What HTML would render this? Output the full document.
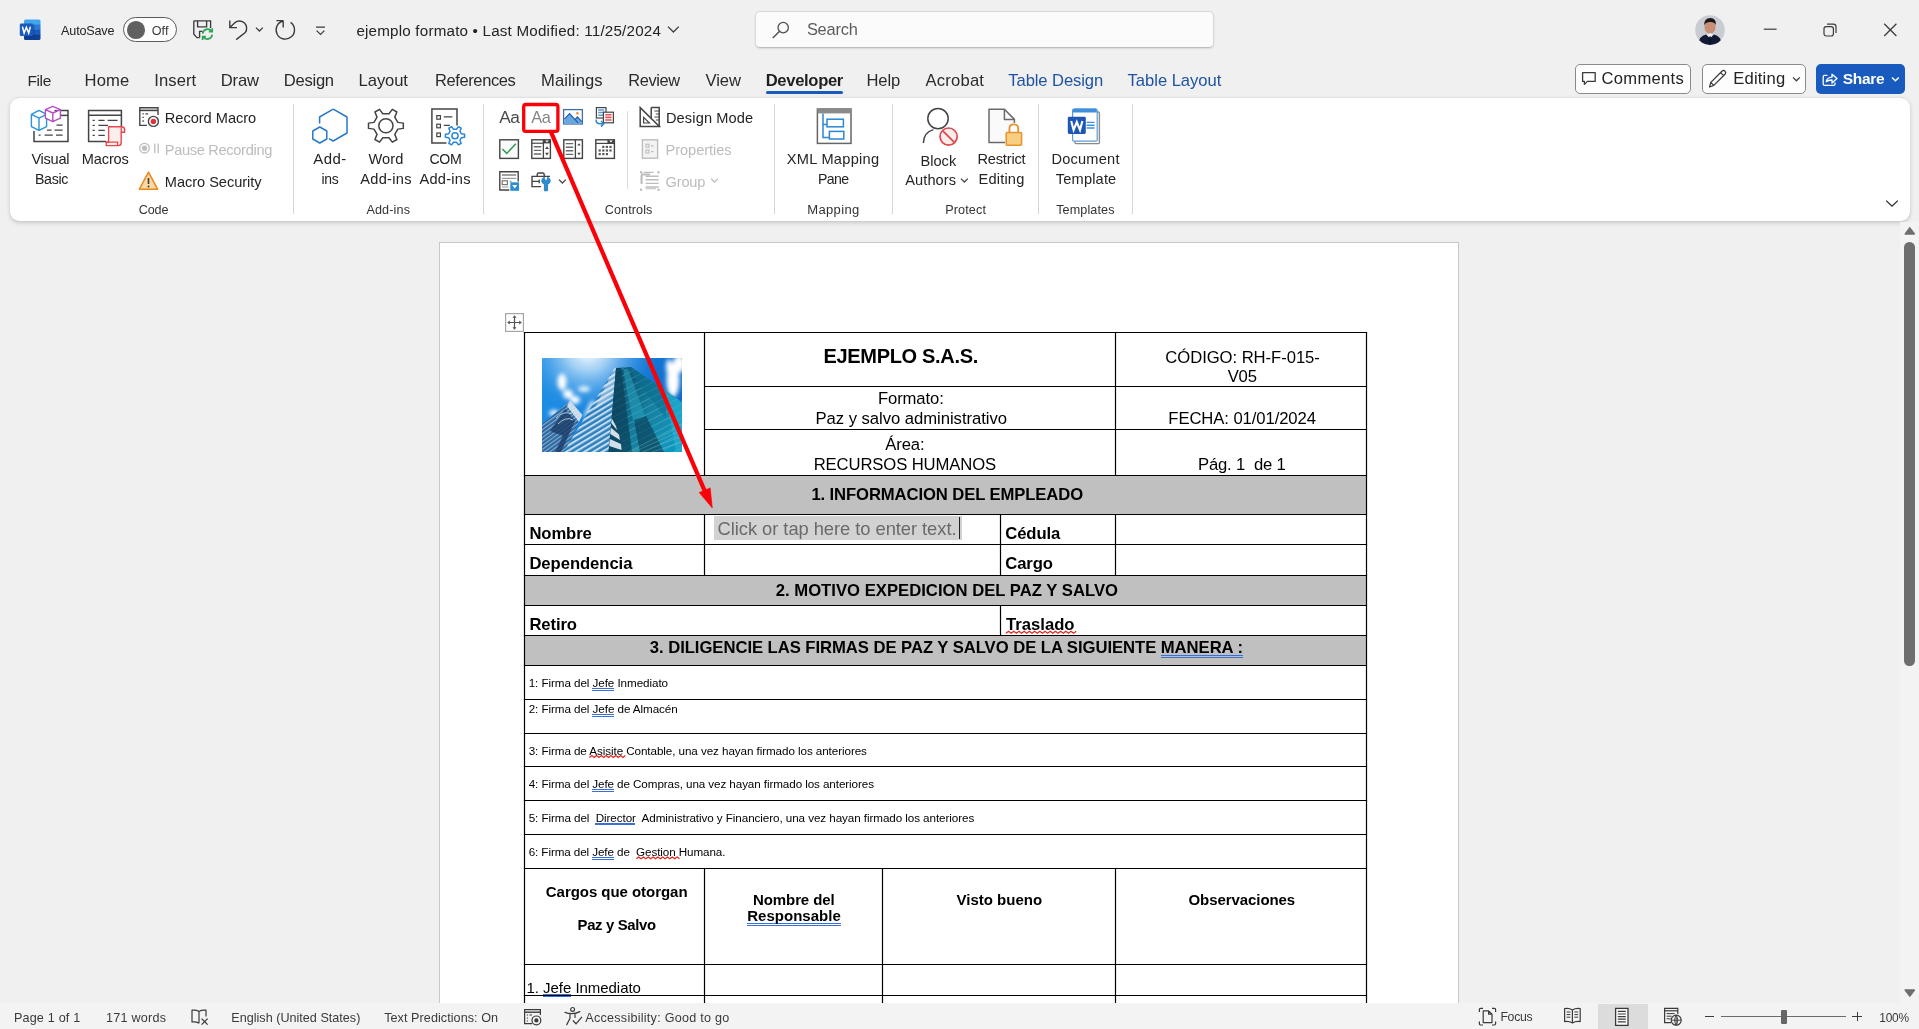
<!DOCTYPE html>
<html><head><meta charset="utf-8"><title>ejemplo formato - Word</title><style>
html,body{margin:0;padding:0}body{width:1919px;height:1029px;position:relative;overflow:hidden;background:#f0f0f0;font-family:"Liberation Sans", sans-serif}
.t{position:absolute;white-space:pre;line-height:1}
#app{position:absolute;left:0;top:0;width:1919px;height:1029px;overflow:hidden;will-change:transform;transform:translateZ(0)}
</style></head><body><div id="app">
<svg style="position:absolute;left:19px;top:19px;overflow:visible;" width="22" height="22" viewBox="0 0 22 22">
<defs><clipPath id="wl"><rect x="5" y="0.5" width="16.5" height="20.5" rx="1.6"/></clipPath></defs>
<g clip-path="url(#wl)">
<rect x="5" y="0" width="17" height="6" fill="#41a5ee"/>
<rect x="5" y="5.6" width="17" height="5.4" fill="#2b7cd3"/>
<rect x="5" y="10.8" width="17" height="5.2" fill="#185abd"/>
<rect x="5" y="15.8" width="17" height="6" fill="#103f91"/>
</g>
<rect x="6.5" y="5.6" width="9" height="12.8" rx="1" fill="#0b2f6e" opacity=".35"/>
<rect x="0.8" y="4.6" width="13.2" height="12.4" rx="1.3" fill="#185abd"/>
<path d="M3.4 7.6 L5.1 14 L7.4 8.2 L9.7 14 L11.4 7.6" fill="none" stroke="#fff" stroke-width="1.5" stroke-linejoin="miter" stroke-linecap="butt"/>
</svg>
<div style="position:absolute;left:123px;top:17px;width:51.6px;height:23.4px;border:1.3px solid #5a5a5a;border-radius:13px;background:#fdfdfd"></div>
<div style="position:absolute;left:127.2px;top:21.2px;width:17.6px;height:17.6px;border-radius:50%;background:#606060"></div>
<svg style="position:absolute;left:192px;top:19px;overflow:visible;" width="24" height="23" viewBox="0 0 24 23">
<path d="M1.8 1.8 H18.6 V9 M1.8 1.8 V15.2 L5 18.6 H7.6 M5.6 1.8 V7.8 H14.6 V1.8 M7.6 18.6 V12.4 H10.5" fill="none" stroke="#3b3b3b" stroke-width="1.35"/>
<path d="M10.6 14.6 A5 5 0 0 1 19.6 12.2 M20.2 9.2 V12.6 H16.8" fill="none" stroke="#2fa55a" stroke-width="1.7"/>
<path d="M20.2 15.6 A5 5 0 0 1 11.2 18 M10.6 21 V17.6 H14" fill="none" stroke="#2fa55a" stroke-width="1.7"/>
</svg>
<svg style="position:absolute;left:228px;top:19px;overflow:visible;" width="22" height="22" viewBox="0 0 22 22">
<path d="M1.8 1.6 V8.6 H9 M2.2 8.2 L7 3.6 A7.2 7.2 0 0 1 17.2 13.6 L8.2 20.6" fill="none" stroke="#3b3b3b" stroke-width="1.4" stroke-linejoin="miter"/>
</svg>
<svg style="position:absolute;left:255px;top:26px;overflow:visible;" width="9" height="7" viewBox="0 0 9 7"><path d="M1 1.6 L4.4 5 L7.8 1.6" fill="none" stroke="#3b3b3b" stroke-width="1.3"/></svg>
<svg style="position:absolute;left:275px;top:19px;overflow:visible;" width="22" height="22" viewBox="0 0 22 22">
<path d="M8.2 1.6 H1.4 M8.2 1.6 V8.4 M8 2 A9.2 9.2 0 1 0 15.6 3.4" fill="none" stroke="#3b3b3b" stroke-width="1.4"/>
</svg>
<svg style="position:absolute;left:315px;top:26px;overflow:visible;" width="11" height="10" viewBox="0 0 11 10"><path d="M1 1.1 H10 M1.6 4.6 L5.5 8.4 L9.4 4.6" fill="none" stroke="#3b3b3b" stroke-width="1.3"/></svg>
<svg style="position:absolute;left:667px;top:25px;overflow:visible;" width="13" height="9" viewBox="0 0 13 9"><path d="M1 1.6 L6.4 7 L11.8 1.6" fill="none" stroke="#3b3b3b" stroke-width="1.3"/></svg>
<div style="position:absolute;left:755.4px;top:10.8px;width:459px;height:37.6px;box-sizing:border-box;border:1px solid #d8d8d8;border-bottom-color:#bdbdbd;border-radius:5px;background:#fbfbfb;box-shadow:0 1px 2px rgba(0,0,0,.10)"></div>
<svg style="position:absolute;left:771px;top:20px;overflow:visible;" width="20" height="20" viewBox="0 0 20 20"><circle cx="12.2" cy="7.6" r="5.2" fill="none" stroke="#505050" stroke-width="1.3"/><path d="M8.4 11.4 L1.8 18" stroke="#505050" stroke-width="1.4"/></svg>
<svg style="position:absolute;left:1694.5px;top:14.5px;overflow:visible;" width="30" height="30" viewBox="0 0 30 30">
<defs><clipPath id="av"><circle cx="15" cy="15" r="14.8"/></clipPath></defs>
<g clip-path="url(#av)">
<rect width="30" height="30" fill="#c9ccd3"/>
<ellipse cx="15" cy="12" rx="5.6" ry="6.6" fill="#c98f75"/>
<path d="M9 10.5 Q9 3 15.4 3 Q21.4 3 21 10.5 Q20 6.8 15 7 Q10.4 7 9 10.5Z" fill="#1c1614"/>
<path d="M3 30 Q4 21 11 19.6 L15 23 L19 19.6 Q26 21 27 30Z" fill="#121a36"/>
<path d="M12 19.4 L15 23.4 L18 19.4 L15 18.2Z" fill="#f1f1f1"/>
<path d="M14.2 21.5 L15.8 21.5 L16.4 30 L13.6 30Z" fill="#0c1226"/>
</g></svg>
<svg style="position:absolute;left:1762px;top:22px;overflow:visible;" width="16" height="16" viewBox="0 0 16 16"><path d="M1.8 7.2 H14.6" stroke="#3b3b3b" stroke-width="1.2"/></svg>
<svg style="position:absolute;left:1822px;top:22px;overflow:visible;" width="16" height="16" viewBox="0 0 16 16"><rect x="2" y="4.6" width="9.4" height="9.4" rx="2.2" fill="none" stroke="#3b3b3b" stroke-width="1.2"/><path d="M5 2.2 H11.4 Q14 2.2 14 4.8 V11" fill="none" stroke="#3b3b3b" stroke-width="1.2"/></svg>
<svg style="position:absolute;left:1882px;top:22px;overflow:visible;" width="16" height="16" viewBox="0 0 16 16"><path d="M2.2 1.8 L14.4 14 M14.4 1.8 L2.2 14" stroke="#3b3b3b" stroke-width="1.25"/></svg>
<div style="position:absolute;left:765.7px;top:91.3px;width:77.6px;height:3px;background:#185abd;border-radius:1.5px"></div>
<div style="position:absolute;left:1575.3px;top:64.3px;width:116.2px;height:29.4px;box-sizing:border-box;border:1px solid #8a8a8a;border-radius:5px;background:#fdfdfd"></div>
<svg style="position:absolute;left:1581px;top:71px;overflow:visible;" width="17" height="16" viewBox="0 0 17 16"><path d="M1.6 1.6 H14.2 V10.4 H6.4 L3.4 13.4 V10.4 H1.6Z" fill="none" stroke="#3b3b3b" stroke-width="1.3" stroke-linejoin="round"/></svg>
<div style="position:absolute;left:1702.2px;top:64.3px;width:103.4px;height:29.4px;box-sizing:border-box;border:1px solid #8a8a8a;border-radius:5px;background:#fdfdfd"></div>
<svg style="position:absolute;left:1707px;top:68px;overflow:visible;" width="22" height="22" viewBox="0 0 22 22"><path d="M2.6 19 L3.8 14.4 L15.2 3 Q16.6 1.8 18 3.2 Q19.4 4.6 18.2 6 L6.8 17.4 Z M3.8 14.4 L6.8 17.4 M13.6 4.6 L16.6 7.6" fill="none" stroke="#3b3b3b" stroke-width="1.25" stroke-linejoin="round"/></svg>
<svg style="position:absolute;left:1792px;top:76px;overflow:visible;" width="9" height="7" viewBox="0 0 9 7"><path d="M1 1.4 L4.4 4.8 L7.8 1.4" fill="none" stroke="#3b3b3b" stroke-width="1.3"/></svg>
<div style="position:absolute;left:1816px;top:64.3px;width:89px;height:29.4px;border-radius:5px;background:#185abd"></div>
<svg style="position:absolute;left:1821px;top:70px;overflow:visible;" width="18" height="18" viewBox="0 0 18 18"><path d="M6.4 5.4 H3.6 Q2.2 5.4 2.2 6.8 V14 Q2.2 15.4 3.6 15.4 H12.6 Q14 15.4 14 14 V12.4 M5.2 11.8 Q6 7.4 11 7.2 V4.2 L16 8.6 L11 13 V10 Q7.6 9.8 5.2 11.8Z" fill="none" stroke="#fff" stroke-width="1.3" stroke-linejoin="round"/></svg>
<svg style="position:absolute;left:1891px;top:76px;overflow:visible;" width="9" height="7" viewBox="0 0 9 7"><path d="M1 1.4 L4.4 4.8 L7.8 1.4" fill="none" stroke="#fff" stroke-width="1.4"/></svg>
<div style="position:absolute;left:10px;top:98px;width:1900px;height:123px;background:#fff;border-radius:9px;box-shadow:0 1.5px 4px rgba(0,0,0,.17),0 0 1px rgba(0,0,0,.18)"></div>
<div style="position:absolute;left:293px;top:104px;width:1px;height:110px;background:#d6d6d6"></div>
<div style="position:absolute;left:483px;top:104px;width:1px;height:110px;background:#d6d6d6"></div>
<div style="position:absolute;left:774px;top:104px;width:1px;height:110px;background:#d6d6d6"></div>
<div style="position:absolute;left:892px;top:104px;width:1px;height:110px;background:#d6d6d6"></div>
<div style="position:absolute;left:1038px;top:104px;width:1px;height:110px;background:#d6d6d6"></div>
<div style="position:absolute;left:1132px;top:104px;width:1px;height:110px;background:#d6d6d6"></div>
<div style="position:absolute;left:627px;top:111px;width:1px;height:78px;background:#dcdcdc"></div>
<svg style="position:absolute;left:30px;top:104px;overflow:visible;" width="42" height="40" viewBox="0 0 42 40">
<path d="M24.5 6.6 H38 V37.4 H4 V27" fill="none" stroke="#444444" stroke-width="1.5"/>
<path d="M25 11.4 H38" stroke="#444444" stroke-width="1.5"/>
<path d="M26.5 21.2 H32.6 M17 26.2 H21.6 M24.5 26.2 H32.6 M8.6 31.2 H10.6 M14.6 31.2 H22.8 M26 31.2 H32.6" stroke="#444444" stroke-width="1.3"/>
<path d="M9 6.4 L16.6 10.4 V22.6 L9 26.4 L1.4 22.6 V10.4 Z M1.4 10.4 L9 14.2 L16.6 10.4 M9 14.2 V26.4" fill="#fff" stroke="#2a93dd" stroke-width="1.4" stroke-linejoin="round"/>
<path d="M22.8 2.4 L30.4 5.6 V14.2 L22.8 17.6 L15.4 14.2 V5.6 Z M15.4 5.6 L22.8 9 L30.4 5.6 M22.8 9 V17.6" fill="#fff" stroke="#b54fc4" stroke-width="1.4" stroke-linejoin="round"/>
</svg>
<svg style="position:absolute;left:86px;top:104px;overflow:visible;" width="42" height="44" viewBox="0 0 42 44">
<path d="M20 37.4 H2.6 V6.6 H35.4 V22" fill="none" stroke="#444444" stroke-width="1.5"/>
<path d="M2.6 11.2 H35.4" stroke="#444444" stroke-width="1.5"/>
<path d="M6.6 16.4 H8.8 M12.4 16.4 H18.6 M21.6 16.4 H31.6 M6.6 21.4 H8.8 M12.4 21.4 H22 M6.6 26.4 H8.8 M12.4 26.4 H18.8 M6.6 31.4 H8.8 M12.4 31.4 H18.8" stroke="#444444" stroke-width="1.3"/>
<path d="M22.6 22.8 H35.6 Q38.6 22.8 38.6 25.6 V28.2 H35.2 V38.8 Q35.2 41.6 32.4 41.6 H20.2 V38.2 H22.6 Z" fill="#fdeeee" stroke="#e5484d" stroke-width="1.4" stroke-linejoin="round"/>
<path d="M35.2 28.2 V25.6 Q35.2 22.8 35.6 22.8 M20.2 38.2 H31.6 V41.4" fill="none" stroke="#e5484d" stroke-width="1.3"/>
</svg>
<svg style="position:absolute;left:138px;top:106px;overflow:visible;" width="22" height="22" viewBox="0 0 22 22">
<path d="M9 19.4 H1.8 V1.8 H20 V9" fill="none" stroke="#444444" stroke-width="1.4"/>
<path d="M1.8 4.4 H20" stroke="#444444" stroke-width="1.6"/>
<path d="M4.4 7.8 H5.8 M7.4 7.8 H10.2 M4.4 11.4 H5.8 M4.4 15 H5.8" stroke="#444444" stroke-width="1.3"/>
<circle cx="15.4" cy="15.4" r="5" fill="#fff" stroke="#444444" stroke-width="1.4"/>
<circle cx="15.4" cy="15.4" r="2.7" fill="#e0303a"/>
</svg>
<svg style="position:absolute;left:138px;top:141px;overflow:visible;" width="24" height="14" viewBox="0 0 24 14">
<circle cx="6.5" cy="7.2" r="4.8" fill="none" stroke="#bdbdbd" stroke-width="1.3"/>
<circle cx="6.5" cy="7.2" r="2.6" fill="#bdbdbd"/>
<path d="M16.8 2.4 V12 M20.2 2.4 V12" stroke="#bdbdbd" stroke-width="1.3"/>
</svg>
<svg style="position:absolute;left:138px;top:170px;overflow:visible;" width="22" height="21" viewBox="0 0 22 21">
<path d="M10.5 2.2 L19.6 19.2 H1.4 Z" fill="#fbd9a6" stroke="#e8891c" stroke-width="1.5" stroke-linejoin="round"/>
<path d="M10.5 8 V14" stroke="#3b3b3b" stroke-width="1.6"/><circle cx="10.5" cy="16.4" r="1" fill="#3b3b3b"/>
</svg>
<svg style="position:absolute;left:310px;top:106px;overflow:visible;" width="40" height="40" viewBox="0 0 40 40">
<path d="M23.2 3.2 L37 11 V27 L23.2 35 L19 32.6 M9.6 17.6 V11 L23.2 3.2" fill="none" stroke="#2878c8" stroke-width="1.5" stroke-linejoin="round"/>
<path d="M9.8 21 L16.8 25 V33 L9.8 37 L2.8 33 V25 Z" fill="none" stroke="#2878c8" stroke-width="1.5" stroke-linejoin="round"/>
</svg>
<svg style="position:absolute;left:366px;top:106px;overflow:visible;" width="40" height="40" viewBox="0 0 40 40"><path d="M31.83 16.38 L37.30 17.12 L37.30 22.38 L31.83 23.12 L28.78 28.40 L30.88 33.50 L26.32 36.14 L22.95 31.77 L16.85 31.77 L13.48 36.14 L8.92 33.50 L11.02 28.40 L7.97 23.12 L2.50 22.38 L2.50 17.12 L7.97 16.38 L11.02 11.10 L8.92 6.00 L13.48 3.36 L16.85 7.73 L22.95 7.73 L26.32 3.36 L30.88 6.00 L28.78 11.10Z" fill="none" stroke="#444444" stroke-width="1.5" stroke-linejoin="round"/><circle cx="19.9" cy="19.75" r="7.1" fill="none" stroke="#444444" stroke-width="1.5"/></svg>
<svg style="position:absolute;left:429px;top:106px;overflow:visible;" width="38" height="40" viewBox="0 0 38 40">
<path d="M17.4 37 H2.9 V2.9 H28 V19.4" fill="none" stroke="#444444" stroke-width="1.5"/>
<rect x="7.8" y="9.6" width="3.6" height="3.6" fill="none" stroke="#444444" stroke-width="1.2"/>
<rect x="7.8" y="18.2" width="3.6" height="3.6" fill="none" stroke="#444444" stroke-width="1.2"/>
<rect x="7.8" y="27" width="3.6" height="3.6" fill="none" stroke="#444444" stroke-width="1.2"/>
<path d="M14.8 10.9 H23.4 M14.8 19.3 H20.8" stroke="#444444" stroke-width="1.2"/>
<path d="M32.41 27.79 L35.57 28.15 L35.57 31.35 L32.41 31.71 L30.90 34.32 L32.17 37.23 L29.40 38.84 L27.51 36.28 L24.49 36.28 L22.60 38.84 L19.83 37.23 L21.10 34.32 L19.59 31.71 L16.43 31.35 L16.43 28.15 L19.59 27.79 L21.10 25.18 L19.83 22.27 L22.60 20.66 L24.49 23.22 L27.51 23.22 L29.40 20.66 L32.17 22.27 L30.90 25.18Z" fill="none" stroke="#2a86d6" stroke-width="1.5" stroke-linejoin="round"/><circle cx="26" cy="29.75" r="3.1" fill="none" stroke="#2a86d6" stroke-width="1.5"/></svg>
<svg style="position:absolute;left:562px;top:108px;overflow:visible;" width="22" height="18" viewBox="0 0 22 18">
<rect x="1.6" y="1.6" width="18.8" height="14.4" fill="#fff" stroke="#3d6fb0" stroke-width="1.3"/>
<path d="M2.2 15.4 V11.4 L7.6 5.6 L13 11.6 L15.4 9 L19.8 13.6 V15.4Z" fill="#6aa6e2"/>
<path d="M2.4 11.2 L7.6 5.6 L16 14.8 M13.2 11.4 L15.4 9 L19.8 13.6" fill="none" stroke="#1e5ea8" stroke-width="1.2"/>
<circle cx="15.4" cy="5.2" r="1.3" fill="#e8912d"/>
</svg>
<svg style="position:absolute;left:594px;top:106px;overflow:visible;" width="22" height="22" viewBox="0 0 22 22">
<rect x="2.4" y="1.6" width="9.6" height="10.4" fill="#fff" stroke="#444444" stroke-width="1.2"/>
<path d="M4.2 4 H10.2 M4.2 6.6 H10.2 M4.2 9.2 H10.2" stroke="#5b9bd5" stroke-width="1.5"/>
<rect x="9.4" y="6.2" width="10" height="10.6" fill="#fff" stroke="#444444" stroke-width="1.2"/>
<path d="M11.2 8.8 H17.6 M11.2 11.4 H17.6 M11.2 14 H17.6" stroke="#e0575b" stroke-width="1.6"/>
<path d="M2 13.6 Q2 17.8 6 17.8 H9.4 M7 15 L9.8 17.8 L7 20.6" fill="none" stroke="#2a86d6" stroke-width="1.5"/>
</svg>
<svg style="position:absolute;left:498px;top:138px;overflow:visible;" width="22" height="22" viewBox="0 0 22 22">
<rect x="1.8" y="1.8" width="18.6" height="18.6" fill="#fbfbfb" stroke="#444444" stroke-width="1.4"/>
<path d="M4.4 11 L8.8 15.4 L17.8 5.8" fill="none" stroke="#2e9a52" stroke-width="1.5"/>
</svg>
<svg style="position:absolute;left:530px;top:138px;overflow:visible;" width="22" height="22" viewBox="0 0 22 22"><rect x="1.8" y="1.8" width="18.6" height="18.6" fill="#fff" stroke="#444444" stroke-width="1.4"/><path d="M13.4 2 V20.4" stroke="#444444" stroke-width="1.3"/><rect x="13.4" y="1.8" width="7" height="3.6" fill="#444444"/><path d="M15.2 2.6 H18.8 L17 4.6Z" fill="#fff"/><path d="M2 5.2 H13.4" stroke="#444444" stroke-width="1.2"/><path d="M3.8 8.8 H11.2 M3.8 12.4 H11.2 M3.8 16 H11.2" stroke="#6a6a6a" stroke-width="1.4"/><path d="M15.1 11 L17 8.2 L18.9 11Z M15.1 14.8 L17 17.6 L18.9 14.8Z" fill="#444444"/></svg>
<svg style="position:absolute;left:562px;top:138px;overflow:visible;" width="22" height="22" viewBox="0 0 22 22"><rect x="1.8" y="1.8" width="18.6" height="18.6" fill="#fff" stroke="#444444" stroke-width="1.4"/><path d="M13.4 2 V20.4" stroke="#444444" stroke-width="1.3"/><path d="M3.8 5.6 H11.2 M3.8 9.2 H11.2 M3.8 12.8 H11.2 M3.8 16.4 H11.2" stroke="#6a6a6a" stroke-width="1.4"/><path d="M15.3 7.6 L17 5.2 L18.7 7.6Z M15.3 14.8 L17 17.2 L18.7 14.8Z" fill="#444444"/></svg>
<svg style="position:absolute;left:594px;top:138px;overflow:visible;" width="22" height="22" viewBox="0 0 22 22">
<rect x="1.8" y="1.8" width="18.6" height="18.6" fill="#fff" stroke="#444444" stroke-width="1.4"/>
<path d="M2 5.4 H20.4" stroke="#444444" stroke-width="1.2"/>
<rect x="13.4" y="1.8" width="7" height="3.6" fill="#444444"/><path d="M15.2 2.6 H18.8 L17 4.6Z" fill="#fff"/>
<g fill="#5a5a5a">
<rect x="8.2" y="7.8" width="2.2" height="2.2"/><rect x="11.8" y="7.8" width="2.2" height="2.2"/><rect x="15.4" y="7.8" width="2.2" height="2.2"/>
<rect x="4.6" y="11.4" width="2.2" height="2.2"/><rect x="8.2" y="11.4" width="2.2" height="2.2"/><rect x="11.8" y="11.4" width="2.2" height="2.2"/><rect x="15.4" y="11.4" width="2.2" height="2.2"/>
<rect x="4.6" y="15" width="2.2" height="2.2"/><rect x="8.2" y="15" width="2.2" height="2.2"/><rect x="11.8" y="15" width="2.2" height="2.2"/>
</g></svg>
<svg style="position:absolute;left:498px;top:170px;overflow:visible;" width="22" height="22" viewBox="0 0 22 22">
<path d="M11.4 20 H1.8 V1.8 H20.2 V11.6" fill="none" stroke="#444444" stroke-width="1.4"/>
<path d="M3.8 5 H18.2" stroke="#8a8a8a" stroke-width="1.6"/>
<path d="M3.8 8.4 H18.2" stroke="#9a9a9a" stroke-width="1.2"/>
<rect x="4.2" y="10.8" width="5.2" height="3.8" fill="#fff" stroke="#777" stroke-width="1.2"/>
<path d="M3.8 17 H10.6 M11.6 11.4 H13.6" stroke="#9a9a9a" stroke-width="1.2"/>
<rect x="12.3" y="12.3" width="8.7" height="8.5" fill="#2a8fd0"/>
<path d="M14.2 14.9 H19.2 L16.7 18.6Z" fill="#fff"/>
</svg>
<svg style="position:absolute;left:530px;top:170px;overflow:visible;" width="24" height="22" viewBox="0 0 24 22">
<path d="M11 16.6 H2 V6.4 H20" fill="none" stroke="#444444" stroke-width="1.4"/>
<path d="M7.2 6.2 V4.4 Q7.2 3 8.6 3 H12.8 Q14.2 3 14.2 4.4 V6.2" fill="none" stroke="#444444" stroke-width="1.4"/>
<path d="M2 11.4 H9.2 M9.2 9.6 V13.2" stroke="#444444" stroke-width="1.3"/>
<path d="M14.4 7.2 V10.2 H17.6 V7.2 Q20.6 8.4 20.2 11.4 Q19.8 13.6 17.6 14.2 V20.8 H14.4 V14.2 Q12.2 13.6 11.8 11.4 Q11.4 8.4 14.4 7.2Z" fill="#2a8fd0" stroke="#1b74b8" stroke-width="0.8"/>
</svg>
<svg style="position:absolute;left:558px;top:178px;overflow:visible;" width="9" height="7" viewBox="0 0 9 7"><path d="M1 1.6 L4.4 5 L7.8 1.6" fill="none" stroke="#444444" stroke-width="1.3"/></svg>
<svg style="position:absolute;left:638px;top:106px;overflow:visible;" width="23" height="22" viewBox="0 0 23 22">
<path d="M2.2 1.6 V20.4 H21.4 Z" fill="none" stroke="#444444" stroke-width="1.5" stroke-linejoin="miter"/>
<path d="M5.6 11.4 V17 H11.4 Z" fill="none" stroke="#444444" stroke-width="1.2"/>
<path d="M13.2 1.6 H21.2 V20 M13.2 1.6 V12.4" fill="none" stroke="#444444" stroke-width="1.5"/>
<path d="M16.4 5 H21 M17.8 8 H21 M16.4 11 H21 M17.8 14 H21" stroke="#444444" stroke-width="1.1"/>
</svg>
<svg style="position:absolute;left:640px;top:138px;overflow:visible;" width="20" height="22" viewBox="0 0 20 22">
<rect x="2.4" y="1.8" width="15.2" height="18.4" fill="#f3f3f3" stroke="#bdbdbd" stroke-width="1.4"/>
<rect x="6" y="6.2" width="3" height="3" fill="none" stroke="#bdbdbd" stroke-width="1.1"/>
<rect x="6" y="12" width="3" height="3" fill="none" stroke="#bdbdbd" stroke-width="1.1"/>
<path d="M11 7.8 H13.6 M11 13.6 H13.6" stroke="#bdbdbd" stroke-width="1.2"/>
</svg>
<svg style="position:absolute;left:638px;top:170px;overflow:visible;" width="24" height="22" viewBox="0 0 24 22">
<g fill="#bdbdbd"><rect x="2" y="1.2" width="2.2" height="2.2"/><rect x="19.4" y="1.2" width="2.2" height="2.2"/><rect x="2" y="18.6" width="2.2" height="2.2"/><rect x="19.4" y="18.6" width="2.2" height="2.2"/></g>
<path d="M5.6 2.4 H15.6 M3 5.2 V13.6 M7.6 18.8 H18" stroke="#bdbdbd" stroke-width="1.1" stroke-dasharray="1.2 0"/>
<path d="M7.6 6.2 H20.6 M7.6 9.8 H20.6 M7.6 13.4 H20.6 M7.6 17 H20.6" stroke="#bdbdbd" stroke-width="1.4"/>
<path d="M3 3.6 H12 V5.4 H4.6 V14 H3Z" fill="#bdbdbd"/>
</svg>
<svg style="position:absolute;left:710px;top:177px;overflow:visible;" width="9" height="7" viewBox="0 0 9 7"><path d="M1 1.6 L4.4 5 L7.8 1.6" fill="none" stroke="#bdbdbd" stroke-width="1.3"/></svg>
<svg style="position:absolute;left:814px;top:106px;overflow:visible;" width="40" height="40" viewBox="0 0 40 40">
<rect x="3.4" y="3" width="33.6" height="34.4" fill="#fff" stroke="#666" stroke-width="1.5"/>
<rect x="3.4" y="3" width="33.6" height="4.4" fill="#8a8a8a"/>
<path d="M9 7.6 V31.4 H15 M9 18.6 H13" fill="none" stroke="#2a86d6" stroke-width="1.5"/>
<rect x="13" y="13.2" width="16.4" height="7.6" fill="#fff" stroke="#2a86d6" stroke-width="1.5"/>
<rect x="15.4" y="25.4" width="14.4" height="7.6" fill="#fff" stroke="#2a86d6" stroke-width="1.5"/>
</svg>
<svg style="position:absolute;left:918px;top:106px;overflow:visible;" width="42" height="44" viewBox="0 0 42 44">
<circle cx="20" cy="12.6" r="10.2" fill="none" stroke="#444444" stroke-width="1.5"/>
<path d="M5.4 37 Q5.6 26.4 15.4 23.6" fill="none" stroke="#444444" stroke-width="1.5"/>
<circle cx="30.6" cy="30.6" r="8.6" fill="#fdecec" stroke="#e0474c" stroke-width="1.7"/>
<path d="M24.6 24.6 L36.6 36.6" stroke="#e0474c" stroke-width="1.7"/>
</svg>
<svg style="position:absolute;left:960px;top:177px;overflow:visible;" width="9" height="7" viewBox="0 0 9 7"><path d="M1 1.6 L4.4 5 L7.8 1.6" fill="none" stroke="#444444" stroke-width="1.3"/></svg>
<svg style="position:absolute;left:986px;top:106px;overflow:visible;" width="38" height="42" viewBox="0 0 38 42">
<path d="M19 36.6 H3 V3.2 H18.4 L28.4 13.4 V17" fill="#fafafa" stroke="#6a6a6a" stroke-width="1.5" stroke-linejoin="round"/>
<path d="M18.4 3.2 V13.4 H28.4" fill="none" stroke="#6a6a6a" stroke-width="1.5" stroke-linejoin="round"/>
<path d="M23.4 27 V22.6 Q23.4 18.4 27.8 18.4 Q32.2 18.4 32.2 22.6 V27" fill="none" stroke="#e8912d" stroke-width="1.8"/>
<rect x="20.2" y="26.4" width="15.4" height="12.8" rx="1" fill="#f8cf82" stroke="#e8912d" stroke-width="1.5"/>
</svg>
<svg style="position:absolute;left:1066px;top:106px;overflow:visible;" width="36" height="40" viewBox="0 0 36 40">
<rect x="9" y="6" width="24.4" height="31.6" rx="1" fill="#fff" stroke="#8a8a8a" stroke-width="1.4"/>
<rect x="6.6" y="3" width="24.6" height="32.2" rx="1.2" fill="#fff" stroke="#5b9bd5" stroke-width="1.2"/>
<path d="M7 4.4 Q7 2.6 8.8 2.6 H29 Q30.8 2.6 30.8 4.4 V6.4 H7Z" fill="#3f8fdd"/>
<path d="M20.6 16.4 H28.6 M20.6 19.2 H28.6 M20.6 22 H28.6" stroke="#3f8fdd" stroke-width="1.4"/>
<rect x="1.8" y="10.8" width="18" height="17.2" rx="1.4" fill="#1e56b3"/>
<path d="M5.2 15 L7.6 24 L10.8 16 L14 24 L16.4 15" fill="none" stroke="#fff" stroke-width="2.1"/>
</svg>
<svg style="position:absolute;left:1885px;top:199px;overflow:visible;" width="14" height="10" viewBox="0 0 14 10"><path d="M1.2 1.6 L7 7.2 L12.8 1.6" fill="none" stroke="#2b2b2b" stroke-width="1.3"/></svg>
<div style="position:absolute;left:439px;top:242px;width:1020px;height:790px;box-sizing:border-box;background:#fff;border:1px solid #c8c8c8"></div>
<svg style="position:absolute;left:505px;top:313px;overflow:visible;" width="19" height="19" viewBox="0 0 19 19">
<rect x="0.6" y="0.6" width="17.8" height="17.8" fill="#fff" stroke="#a6a6a6" stroke-width="1.2"/>
<path d="M9.5 3.4 V15.6 M3.4 9.5 H15.6" stroke="#555" stroke-width="1.2"/>
<path d="M9.5 2.2 L11.5 4.8 H7.5Z M9.5 16.8 L11.5 14.2 H7.5Z M2.2 9.5 L4.8 7.5 V11.5Z M16.8 9.5 L14.2 7.5 V11.5Z" fill="#555"/>
</svg>
<div style="position:absolute;left:524px;top:475px;width:842.5px;height:39px;background:#c0c0c0"></div>
<div style="position:absolute;left:524px;top:575px;width:842.5px;height:30px;background:#c0c0c0"></div>
<div style="position:absolute;left:524px;top:635px;width:842.5px;height:30px;background:#c0c0c0"></div>
<div style="position:absolute;left:714.3px;top:516.3px;width:248.2px;height:23.6px;background:#d2d2d2"></div>
<div style="position:absolute;left:958.6px;top:517px;width:1.2px;height:22.4px;background:#222"></div>
<svg style="position:absolute;left:0px;top:0px;overflow:visible;pointer-events:none" width="1919" height="1029" viewBox="0 0 1919 1029"><g stroke="#000" stroke-width="1.2" fill="none"><path d="M523.9 332.5 H1367.1"/><path d="M704.5 386.5 H1367.1"/><path d="M704.5 429.5 H1367.1"/><path d="M523.9 475.5 H1367.1"/><path d="M523.9 514.5 H1367.1"/><path d="M523.9 544.5 H1367.1"/><path d="M523.9 575.5 H1367.1"/><path d="M523.9 605.5 H1367.1"/><path d="M523.9 635.5 H1367.1"/><path d="M523.9 665.5 H1367.1"/><path d="M523.9 699.5 H1367.1"/><path d="M523.9 733.5 H1367.1"/><path d="M523.9 766.5 H1367.1"/><path d="M523.9 800.5 H1367.1"/><path d="M523.9 834.5 H1367.1"/><path d="M523.9 868.5 H1367.1"/><path d="M523.9 964.5 H1367.1"/><path d="M523.9 995.5 H1367.1"/><path d="M524.5 332 V1003"/><path d="M1366.5 332 V1003"/><path d="M704.5 332 V475"/><path d="M704.5 514 V575"/><path d="M704.5 868 V1003"/><path d="M1115.5 332 V475"/><path d="M1115.5 514 V575"/><path d="M1115.5 868 V1003"/><path d="M1000.5 514 V575"/><path d="M1000.5 605 V635"/><path d="M882.5 868 V1003"/></g></svg>
<svg style="position:absolute;left:542px;top:358px;overflow:visible;" width="140" height="94" viewBox="0 0 140 94">
<defs>
<linearGradient id="sky" x1="0" y1="0" x2="1" y2="0.3"><stop offset="0" stop-color="#1f8fe4"/><stop offset=".45" stop-color="#1884df"/><stop offset="1" stop-color="#0d6acb"/></linearGradient>
<radialGradient id="sun" cx="0.33" cy="-0.05" r="0.5" gradientTransform="scale(1 1.4)"><stop offset="0" stop-color="#ffffff" stop-opacity="1"/><stop offset=".3" stop-color="#d9eefc" stop-opacity=".7"/><stop offset="1" stop-color="#1d8be2" stop-opacity="0"/></radialGradient>
<linearGradient id="gl" x1="0" y1="0" x2="1" y2="0.6"><stop offset="0" stop-color="#0a4e6c"/><stop offset=".3" stop-color="#0d5f7e"/><stop offset=".6" stop-color="#137d9c"/><stop offset="1" stop-color="#1196bd"/></linearGradient>
<linearGradient id="lf" x1="0" y1="0" x2="0" y2="1"><stop offset="0" stop-color="#bcd7ea"/><stop offset="1" stop-color="#6fa6d2"/></linearGradient>
<pattern id="str" width="8" height="4.6" patternUnits="userSpaceOnUse" patternTransform="rotate(-31)"><rect width="8" height="4.6" fill="#2b80bf"/><rect width="8" height="2.1" fill="#c6dcee"/></pattern>
<pattern id="str2" width="4" height="3.2" patternUnits="userSpaceOnUse" patternTransform="rotate(-36)"><rect width="4" height="3.2" fill="#2d68a0"/><rect width="4" height="1.1" fill="#86aed0"/></pattern>
<pattern id="grid" width="9" height="6.5" patternUnits="userSpaceOnUse" patternTransform="rotate(-27)"><path d="M0 0.4 H9" stroke="#9fd3dc" stroke-width=".55" opacity=".6"/></pattern>
<clipPath id="ph"><rect width="140" height="94" rx="1.2"/></clipPath>
<filter id="bl" x="-30%" y="-30%" width="160%" height="160%"><feGaussianBlur stdDeviation="2.2"/></filter>
<filter id="b2" x="-5%" y="-5%" width="110%" height="110%"><feGaussianBlur stdDeviation="0.45"/></filter>
</defs>
<g clip-path="url(#ph)">
<rect width="140" height="94" fill="url(#sky)"/>
<rect width="140" height="94" fill="url(#sun)"/>
<g filter="url(#bl)" fill="#fff">
<ellipse cx="20" cy="24" rx="4.5" ry="8.5"/><ellipse cx="26" cy="36" rx="5" ry="4.5"/><ellipse cx="33" cy="42" rx="5" ry="4"/><ellipse cx="42" cy="31" rx="6" ry="2.4"/>
<ellipse cx="12" cy="55" rx="5" ry="3"/><path d="M42 58 L50 42 L53 46 L45 60Z"/>
<ellipse cx="131" cy="22" rx="6.5" ry="17"/><ellipse cx="137" cy="6" rx="6" ry="9"/><ellipse cx="127" cy="9" rx="3" ry="8"/>
</g>
<g filter="url(#b2)">
<path d="M28 43 L0 66 V94 H23 L40 57 Z" fill="url(#str2)"/>
<path d="M28 42.6 L40.4 57 L37 64 L25 48Z" fill="#e3ecf5" opacity=".85"/>
<path d="M8 73 L23 51 L33 63 L19 94 H13 L21 78Z" fill="#1b3c66" opacity=".8"/>
<path d="M14 60 Q22 52 30 56 M16 66 Q24 58 31 62" stroke="#cfe0ef" stroke-width="1" fill="none" opacity=".8"/>
<path d="M72 11 L74 10 L67 94 H21.7 Z" fill="url(#str)"/>
<path d="M72 11 L74 10 L72 36 L52 52Z" fill="#e6f0f8" opacity=".45"/>
<path d="M74 10 L89 9 L124 33 L140 44 V94 H66.6 Z" fill="url(#gl)"/>
<path d="M74 10 L89 9 L124 33 L140 44 V94 H66.6 Z" fill="url(#grid)"/>
<path d="M74 10.5 L79 10 L84 48 L90 94 H66.6Z" fill="#094058" opacity=".7"/>
<path d="M81 11 L86 10.4 L98 44 L104 62 L92 66 L86 40 Z" fill="#2aa7c6" opacity=".5"/>
<path d="M86 10 L89 9 L124 33 L124 60 L100 30 Z" fill="#0d6e92" opacity=".55"/>
<path d="M122 32 L140 44 V94 H134 L128 60 Z" fill="#25b0d6" opacity=".6"/>
<path d="M66.6 94 L69.6 60 L78 78 L80 94Z" fill="#0d4a66" opacity=".9"/>
<path d="M67.2 88 L67.8 81 L79 86 L79.6 92Z M68.2 76 L68.8 69.6 L77 76.4 L78 82Z M69.2 65 L69.6 60 L74 68 L75 72Z" fill="#e9f0f6" opacity=".9"/>
<path d="M92 62 L104 58 L122 94 H98 Z" fill="#073750" opacity=".6"/>
<path d="M86 94 L140 66 M92 94 L140 72 M100 94 L140 78 M110 94 L140 84" stroke="#c9d6c0" stroke-width=".5" opacity=".55"/>
</g>
</g></svg>
<div style="position:absolute;left:1161px;top:654.8px;width:82.09999999999991px;height:1.0px;background:#3a6fd8"></div>
<div style="position:absolute;left:1161px;top:656.8px;width:82.09999999999991px;height:1.0px;background:#3a6fd8"></div>
<div style="position:absolute;left:592px;top:688.0px;width:22px;height:0.9px;background:#3a6fd8"></div>
<div style="position:absolute;left:592px;top:689.7px;width:22px;height:0.9px;background:#3a6fd8"></div>
<div style="position:absolute;left:592px;top:714.1px;width:22px;height:0.9px;background:#3a6fd8"></div>
<div style="position:absolute;left:592px;top:715.8000000000001px;width:22px;height:0.9px;background:#3a6fd8"></div>
<div style="position:absolute;left:592px;top:788.9000000000001px;width:22px;height:0.9px;background:#3a6fd8"></div>
<div style="position:absolute;left:592px;top:790.6000000000001px;width:22px;height:0.9px;background:#3a6fd8"></div>
<div style="position:absolute;left:592px;top:857.2px;width:22px;height:0.9px;background:#3a6fd8"></div>
<div style="position:absolute;left:592px;top:858.9000000000001px;width:22px;height:0.9px;background:#3a6fd8"></div>
<div style="position:absolute;left:595.1px;top:822.7px;width:39.89999999999998px;height:0.9px;background:#3a6fd8"></div>
<div style="position:absolute;left:595.1px;top:824.4000000000001px;width:39.89999999999998px;height:0.9px;background:#3a6fd8"></div>
<div style="position:absolute;left:747.2px;top:922.5px;width:93.59999999999991px;height:1.0px;background:#3a6fd8"></div>
<div style="position:absolute;left:747.2px;top:924.5px;width:93.59999999999991px;height:1.0px;background:#3a6fd8"></div>
<div style="position:absolute;left:542.9px;top:994.2px;width:28.200000000000045px;height:0.9px;background:#3a6fd8"></div>
<div style="position:absolute;left:542.9px;top:996.0px;width:28.200000000000045px;height:0.9px;background:#3a6fd8"></div>
<svg style="position:absolute;left:0;top:0;overflow:visible" width="1919" height="1029"><path d="M1006 633.3 L1008.6 631.3 L1011.2 633.3 L1013.8 631.3 L1016.4 633.3 L1019.0 631.3 L1021.6 633.3 L1024.2 631.3 L1026.8 633.3 L1029.4 631.3 L1032.0 633.3 L1034.6 631.3 L1037.2 633.3 L1039.8 631.3 L1042.4 633.3 L1045.0 631.3 L1047.6 633.3 L1050.2 631.3 L1052.8 633.3 L1055.4 631.3 L1058.0 633.3 L1060.6 631.3 L1063.2 633.3 L1065.8 631.3 L1068.4 633.3 L1071.0 631.3 L1073.6 633.3 L1076.2 631.3" fill="none" stroke="#e3261d" stroke-width="1.25"/></svg>
<svg style="position:absolute;left:0;top:0;overflow:visible" width="1919" height="1029"><path d="M589.4 757.4 L591.8 755.6 L594.2 757.4 L596.6 755.6 L599.0 757.4 L601.4 755.6 L603.8 757.4 L606.2 755.6 L608.6 757.4 L611.0 755.6 L613.4 757.4 L615.8 755.6 L618.2 757.4 L620.6 755.6 L623.0 757.4 L625.4 755.6" fill="none" stroke="#e3261d" stroke-width="1.25"/></svg>
<svg style="position:absolute;left:0;top:0;overflow:visible" width="1919" height="1029"><path d="M636.3 858.8 L638.7 857.0 L641.1 858.8 L643.5 857.0 L645.9 858.8 L648.3 857.0 L650.7 858.8 L653.1 857.0 L655.5 858.8 L657.9 857.0 L660.3 858.8 L662.7 857.0 L665.1 858.8 L667.5 857.0 L669.9 858.8 L672.3 857.0 L674.7 858.8 L677.1 857.0 L679.5 858.8" fill="none" stroke="#e3261d" stroke-width="1.25"/></svg>
<div style="position:absolute;left:1900px;top:222px;width:19px;height:781px;background:#f3f3f3"></div>
<svg style="position:absolute;left:1903px;top:226px;overflow:visible;" width="13" height="10" viewBox="0 0 13 10"><path d="M6.4 1.2 Q6.9 0.8 7.4 1.4 L12 7.6 Q12.4 8.6 11.2 8.8 H2.2 Q1 8.6 1.6 7.6 Z" fill="#6e6e6e"/></svg>
<div style="position:absolute;left:1904.2px;top:241.6px;width:10.6px;height:424px;background:#6e6e6e;border-radius:5.3px"></div>
<svg style="position:absolute;left:1903px;top:988px;overflow:visible;" width="13" height="10" viewBox="0 0 13 10"><path d="M6.4 8.8 Q6.9 9.2 7.4 8.6 L12 2.4 Q12.4 1.4 11.2 1.2 H2.2 Q1 1.4 1.6 2.4 Z" fill="#6e6e6e"/></svg>
<div style="position:absolute;left:0px;top:1003px;width:1919px;height:26px;background:#f3f3f3"></div>
<svg style="position:absolute;left:190px;top:1008px;overflow:visible;" width="20" height="18" viewBox="0 0 20 18">
<path d="M9 3.4 V15.2 M9 3.4 Q6.4 1.8 2 2.2 V14 Q6.4 13.6 9 15.2 M9 3.4 Q11.6 1.8 16 2.2 V8.4" fill="none" stroke="#3a3a3a" stroke-width="1.2" stroke-linejoin="round"/>
<path d="M11.6 10.6 L17.6 16.6 M17.6 10.6 L11.6 16.6" stroke="#3a3a3a" stroke-width="1.3"/>
</svg>
<svg style="position:absolute;left:523px;top:1008px;overflow:visible;" width="20" height="18" viewBox="0 0 20 18">
<path d="M9 15.6 H1.6 V1.6 H17.4 V7" fill="none" stroke="#3a3a3a" stroke-width="1.2"/>
<path d="M1.6 4.2 H17.4" stroke="#3a3a3a" stroke-width="1.4"/>
<path d="M3.8 7 H5 M6.4 7 H9 M3.8 10 H5 M3.8 13 H5" stroke="#3a3a3a" stroke-width="1.1"/>
<circle cx="13.4" cy="12.4" r="4.4" fill="#f3f3f3" stroke="#3a3a3a" stroke-width="1.2"/><circle cx="13.4" cy="12.4" r="2.1" fill="#3a3a3a"/>
</svg>
<svg style="position:absolute;left:563px;top:1006px;overflow:visible;" width="22" height="21" viewBox="0 0 22 21">
<circle cx="9.6" cy="3.4" r="1.9" fill="none" stroke="#3a3a3a" stroke-width="1.2"/>
<path d="M2 6.4 Q9.6 9.4 16.8 5.6 M7 8 V12.4 L3.8 18.6 M12 8 V11.4" fill="none" stroke="#3a3a3a" stroke-width="1.2" stroke-linecap="round"/>
<path d="M9.8 14.4 L13 17.8 L19 10.8" fill="none" stroke="#3a3a3a" stroke-width="1.3"/>
</svg>
<svg style="position:absolute;left:1478px;top:1007px;overflow:visible;" width="20" height="20" viewBox="0 0 20 20">
<path d="M1.4 5 V2.6 Q1.4 1.4 2.6 1.4 H5 M14 1.4 H16.4 Q17.6 1.4 17.6 2.6 V5 M17.6 14.4 V16.8 Q17.6 18 16.4 18 H14 M5 18 H2.6 Q1.4 18 1.4 16.8 V14.4" fill="none" stroke="#3a3a3a" stroke-width="1.2"/>
<path d="M5.2 3.8 H10.6 L14 7.2 V15.6 H5.2Z M10.6 3.8 V7.2 H14" fill="none" stroke="#3a3a3a" stroke-width="1.2" stroke-linejoin="round"/>
</svg>
<svg style="position:absolute;left:1563px;top:1007px;overflow:visible;" width="20" height="18" viewBox="0 0 20 18">
<path d="M9.4 3 V16 M9.4 3 Q6.4 1 1.6 1.6 V14.6 Q6.4 14 9.4 16 M9.4 3 Q12.4 1 17.2 1.6 V14.6 Q12.4 14 9.4 16" fill="none" stroke="#3a3a3a" stroke-width="1.2" stroke-linejoin="round"/>
<path d="M3.6 5 H7.4 M3.6 7.6 H7.4 M3.6 10.2 H7.4 M11.4 5 H15.2 M11.4 7.6 H15.2 M11.4 10.2 H15.2" stroke="#3a3a3a" stroke-width="1"/>
</svg>
<div style="position:absolute;left:1598px;top:1004px;width:50px;height:25px;background:#dcdcdc"></div>
<svg style="position:absolute;left:1614px;top:1007px;overflow:visible;" width="16" height="20" viewBox="0 0 16 20">
<rect x="1.6" y="1.4" width="12.4" height="17" fill="#fdfdfd" stroke="#3a3a3a" stroke-width="1.3"/>
<path d="M3.8 4.4 H11.8 M3.8 7 H11.8 M3.8 9.6 H11.8 M3.8 12.2 H11.8 M3.8 14.8 H11.8" stroke="#3a3a3a" stroke-width="1.2"/>
</svg>
<svg style="position:absolute;left:1663px;top:1007px;overflow:visible;" width="20" height="20" viewBox="0 0 20 20">
<path d="M8 15.6 H1.6 V1.4 H14.8 V7" fill="none" stroke="#3a3a3a" stroke-width="1.2"/>
<path d="M1.6 3.8 H14.8" stroke="#3a3a3a" stroke-width="1.2"/>
<path d="M3.6 6.6 H11.6 M3.6 9.2 H8.6 M3.6 11.8 H7.6" stroke="#3a3a3a" stroke-width="1"/>
<circle cx="13.2" cy="13.2" r="5" fill="#f3f3f3" stroke="#3a3a3a" stroke-width="1.2"/>
<path d="M8.2 13.2 H18.2 M13.2 8.2 V18.2 M13.2 8.2 Q10 13.2 13.2 18.2 M13.2 8.2 Q16.4 13.2 13.2 18.2" fill="none" stroke="#3a3a3a" stroke-width="0.9"/>
</svg>
<div style="position:absolute;left:1705px;top:1016.2px;width:9.4px;height:1.2px;background:#3a3a3a"></div>
<div style="position:absolute;left:1721.3px;top:1016.4px;width:124.3px;height:1px;background:#6a6a6a"></div>
<div style="position:absolute;left:1781.2px;top:1010px;width:5.8px;height:13.8px;background:#666;border-radius:1px"></div>
<div style="position:absolute;left:1852.4px;top:1016.2px;width:9.4px;height:1.2px;background:#3a3a3a"></div>
<div style="position:absolute;left:1856.5px;top:1012.1px;width:1.2px;height:9.4px;background:#3a3a3a"></div>
<span class="t" id="t0" style="left:61.10px;top:25.02px;font-size:12.6px;color:#242424;letter-spacing:-0.178px;">AutoSave</span>
<span class="t" id="t1" style="left:151.70px;top:25.02px;font-size:12.6px;color:#3a3a3a;letter-spacing:0.141px;">Off</span>
<span class="t" id="t2" style="left:356.40px;top:23.01px;font-size:15.2px;color:#242424;letter-spacing:0.195px;">ejemplo formato • Last Modified: 11/25/2024</span>
<span class="t" id="t3" style="left:806.90px;top:21.00px;font-size:16.4px;color:#5c5c5c;letter-spacing:-0.206px;">Search</span>
<span class="t" id="t4" style="left:27.40px;top:73.01px;font-size:15.49px;color:#2b2b2b;letter-spacing:-0.338px;">File</span>
<span class="t" id="t5" style="left:84.60px;top:73.01px;font-size:16.6px;color:#2b2b2b;letter-spacing:0.159px;">Home</span>
<span class="t" id="t6" style="left:154.30px;top:73.01px;font-size:16.6px;color:#2b2b2b;letter-spacing:0.081px;">Insert</span>
<span class="t" id="t7" style="left:220.70px;top:73.01px;font-size:16.6px;color:#2b2b2b;letter-spacing:-0.109px;">Draw</span>
<span class="t" id="t8" style="left:283.80px;top:73.01px;font-size:16.6px;color:#2b2b2b;letter-spacing:-0.276px;">Design</span>
<span class="t" id="t9" style="left:358.60px;top:73.01px;font-size:16.6px;color:#2b2b2b;letter-spacing:-0.088px;">Layout</span>
<span class="t" id="t10" style="left:434.90px;top:72.00px;font-size:16.48px;color:#2b2b2b;letter-spacing:-0.362px;">References</span>
<span class="t" id="t11" style="left:541.00px;top:73.01px;font-size:16.6px;color:#2b2b2b;letter-spacing:0.103px;">Mailings</span>
<span class="t" id="t12" style="left:628.20px;top:72.02px;font-size:16.37px;color:#2b2b2b;letter-spacing:-0.357px;">Review</span>
<span class="t" id="t13" style="left:705.50px;top:73.01px;font-size:16.6px;color:#2b2b2b;letter-spacing:-0.068px;">View</span>
<span class="t" id="t14" style="left:866.40px;top:73.01px;font-size:16.6px;color:#2b2b2b;letter-spacing:-0.060px;">Help</span>
<span class="t" id="t15" style="left:925.50px;top:73.01px;font-size:16.6px;color:#2b2b2b;letter-spacing:0.216px;">Acrobat</span>
<span class="t" id="t16" style="left:765.70px;top:73.01px;font-size:16.6px;font-weight:700;color:#1f1f1f;letter-spacing:-0.328px;">Developer</span>
<span class="t" id="t17" style="left:1008.30px;top:73.01px;font-size:16.6px;color:#1e53a3;letter-spacing:-0.095px;">Table Design</span>
<span class="t" id="t18" style="left:1127.60px;top:73.01px;font-size:16.6px;color:#1e53a3;letter-spacing:-0.034px;">Table Layout</span>
<span class="t" id="t19" style="left:1601.50px;top:71.00px;font-size:16.6px;color:#242424;letter-spacing:0.283px;">Comments</span>
<span class="t" id="t20" style="left:1733.20px;top:71.00px;font-size:16.6px;color:#242424;letter-spacing:0.207px;">Editing</span>
<span class="t" id="t21" style="left:1842.80px;top:71.01px;font-size:15.51px;font-weight:700;color:#ffffff;letter-spacing:-0.339px;">Share</span>
<span class="t" id="t22" style="left:31.40px;top:152.00px;font-size:14.6px;color:#242424;letter-spacing:-0.264px;">Visual</span>
<span class="t" id="t23" style="left:34.90px;top:172.01px;font-size:14.22px;color:#242424;letter-spacing:-0.316px;">Basic</span>
<span class="t" id="t24" style="left:81.70px;top:152.00px;font-size:14.6px;color:#242424;letter-spacing:-0.124px;">Macros</span>
<span class="t" id="t25" style="left:164.80px;top:111.02px;font-size:14.6px;color:#242424;letter-spacing:-0.021px;">Record Macro</span>
<span class="t" id="t26" style="left:164.80px;top:143.02px;font-size:14.6px;color:#bcbcbc;letter-spacing:-0.318px;">Pause Recording</span>
<span class="t" id="t27" style="left:164.80px;top:175.02px;font-size:14.6px;color:#242424;letter-spacing:-0.045px;">Macro Security</span>
<span class="t" id="t28" style="left:138.70px;top:204.01px;font-size:12.6px;color:#333;letter-spacing:-0.127px;">Code</span>
<span class="t" id="t29" style="left:313.30px;top:151.00px;font-size:14.98px;color:#242424;letter-spacing:0.419px;">Add-</span>
<span class="t" id="t30" style="left:321.50px;top:173.00px;font-size:13.95px;color:#242424;letter-spacing:-0.309px;">ins</span>
<span class="t" id="t31" style="left:368.40px;top:152.01px;font-size:14.6px;color:#242424;letter-spacing:0.098px;">Word</span>
<span class="t" id="t32" style="left:360.20px;top:172.02px;font-size:14.6px;color:#242424;letter-spacing:0.317px;">Add-ins</span>
<span class="t" id="t33" style="left:429.40px;top:152.00px;font-size:14.12px;color:#242424;letter-spacing:-0.307px;">COM</span>
<span class="t" id="t34" style="left:419.40px;top:172.02px;font-size:14.6px;color:#242424;letter-spacing:0.274px;">Add-ins</span>
<span class="t" id="t35" style="left:366.40px;top:204.01px;font-size:12.6px;color:#333;letter-spacing:0.142px;">Add-ins</span>
<span class="t" id="t36" style="left:499.20px;top:109.01px;font-size:17.3px;color:#4a4a4a;letter-spacing:-0.370px;">Aa</span>
<span class="t" id="t37" style="left:531.30px;top:109.01px;font-size:16.37px;color:#858585;letter-spacing:-0.358px;">Aa</span>
<span class="t" id="t38" style="left:665.90px;top:111.02px;font-size:14.6px;color:#242424;letter-spacing:0.136px;">Design Mode</span>
<span class="t" id="t39" style="left:665.60px;top:143.02px;font-size:14.6px;color:#bcbcbc;letter-spacing:-0.062px;">Properties</span>
<span class="t" id="t40" style="left:665.60px;top:175.02px;font-size:14.6px;color:#bcbcbc;letter-spacing:-0.192px;">Group</span>
<span class="t" id="t41" style="left:604.70px;top:204.01px;font-size:12.6px;color:#333;letter-spacing:0.112px;">Controls</span>
<span class="t" id="t42" style="left:786.80px;top:152.01px;font-size:14.6px;color:#242424;letter-spacing:0.280px;">XML Mapping</span>
<span class="t" id="t43" style="left:818.10px;top:172.01px;font-size:14.1px;color:#242424;letter-spacing:-0.680px;">Pane</span>
<span class="t" id="t44" style="left:807.20px;top:203.00px;font-size:13.03px;color:#333;letter-spacing:0.366px;">Mapping</span>
<span class="t" id="t45" style="left:920.50px;top:154.02px;font-size:14.6px;color:#242424;letter-spacing:0.003px;">Block</span>
<span class="t" id="t46" style="left:905.20px;top:173.01px;font-size:14.6px;color:#242424;letter-spacing:0.100px;">Authors</span>
<span class="t" id="t47" style="left:977.40px;top:152.01px;font-size:14.6px;color:#242424;letter-spacing:-0.171px;">Restrict</span>
<span class="t" id="t48" style="left:978.50px;top:172.01px;font-size:14.6px;color:#242424;letter-spacing:0.196px;">Editing</span>
<span class="t" id="t49" style="left:945.20px;top:204.01px;font-size:12.6px;color:#333;letter-spacing:0.142px;">Protect</span>
<span class="t" id="t50" style="left:1051.40px;top:152.01px;font-size:14.6px;color:#242424;letter-spacing:0.223px;">Document</span>
<span class="t" id="t51" style="left:1055.80px;top:172.01px;font-size:14.6px;color:#242424;letter-spacing:0.173px;">Template</span>
<span class="t" id="t52" style="left:1056.20px;top:204.01px;font-size:12.6px;color:#333;letter-spacing:0.110px;">Templates</span>
<span class="t" id="t53" style="left:823.50px;top:346.01px;font-size:20px;font-weight:700;color:#000;letter-spacing:-0.317px;">EJEMPLO S.A.S.</span>
<span class="t" id="t54" style="left:877.90px;top:391.00px;font-size:16.67px;color:#000;letter-spacing:-0.095px;">Formato:</span>
<span class="t" id="t55" style="left:815.50px;top:411.01px;font-size:16.67px;color:#000;letter-spacing:-0.041px;">Paz y salvo administrativo</span>
<span class="t" id="t56" style="left:885.30px;top:437.01px;font-size:16.67px;color:#000;letter-spacing:-0.122px;">Área:</span>
<span class="t" id="t57" style="left:813.70px;top:457.01px;font-size:16.67px;color:#000;letter-spacing:-0.117px;">RECURSOS HUMANOS</span>
<span class="t" id="t58" style="left:1165.30px;top:350.00px;font-size:16.67px;color:#000;letter-spacing:-0.058px;">CÓDIGO: RH-F-015-</span>
<span class="t" id="t59" style="left:1227.70px;top:369.01px;font-size:16.67px;color:#000;letter-spacing:-0.180px;">V05</span>
<span class="t" id="t60" style="left:1168.30px;top:411.01px;font-size:16.67px;color:#000;letter-spacing:-0.087px;">FECHA: 01/01/2024</span>
<span class="t" id="t61" style="left:1198.00px;top:457.01px;font-size:16.67px;color:#000;letter-spacing:-0.187px;">Pág. 1  de 1</span>
<span class="t" id="t62" style="left:811.40px;top:487.01px;font-size:16.67px;font-weight:700;color:#000;letter-spacing:-0.109px;">1. INFORMACION DEL EMPLEADO</span>
<span class="t" id="t63" style="left:529.40px;top:526.01px;font-size:16.67px;font-weight:700;color:#000;letter-spacing:-0.106px;">Nombre</span>
<span class="t" id="t64" style="left:717.60px;top:520.01px;font-size:18.33px;color:#6a6a6a;letter-spacing:-0.048px;">Click or tap here to enter text.</span>
<span class="t" id="t65" style="left:1005.20px;top:526.01px;font-size:16.67px;font-weight:700;color:#000;letter-spacing:-0.091px;">Cédula</span>
<span class="t" id="t66" style="left:529.40px;top:556.01px;font-size:16.67px;font-weight:700;color:#000;letter-spacing:-0.061px;">Dependencia</span>
<span class="t" id="t67" style="left:1005.20px;top:556.01px;font-size:16.67px;font-weight:700;color:#000;letter-spacing:-0.085px;">Cargo</span>
<span class="t" id="t68" style="left:775.70px;top:583.00px;font-size:16.67px;font-weight:700;color:#000;letter-spacing:0.013px;">2. MOTIVO EXPEDICION DEL PAZ Y SALVO</span>
<span class="t" id="t69" style="left:529.40px;top:617.01px;font-size:16.67px;font-weight:700;color:#000;letter-spacing:-0.104px;">Retiro</span>
<span class="t" id="t70" style="left:1006.00px;top:617.01px;font-size:16.67px;font-weight:700;color:#000;letter-spacing:-0.002px;">Traslado</span>
<span class="t" id="t71" style="left:649.80px;top:640.01px;font-size:16.67px;font-weight:700;color:#000;letter-spacing:-0.047px;">3. DILIGENCIE LAS FIRMAS DE PAZ Y SALVO DE LA SIGUIENTE MANERA :</span>
<span class="t" id="t72" style="left:528.70px;top:677.02px;font-size:11.67px;color:#000;letter-spacing:-0.072px;">1: Firma del Jefe Inmediato</span>
<span class="t" id="t73" style="left:528.70px;top:703.01px;font-size:11.67px;color:#000;letter-spacing:-0.070px;">2: Firma del Jefe de Almacén</span>
<span class="t" id="t74" style="left:528.70px;top:745.00px;font-size:11.67px;color:#000;letter-spacing:-0.079px;">3: Firma de Asisite Contable, una vez hayan firmado los anteriores</span>
<span class="t" id="t75" style="left:528.70px;top:778.01px;font-size:11.67px;color:#000;letter-spacing:-0.090px;">4: Firma del Jefe de Compras, una vez hayan firmado los anteriores</span>
<span class="t" id="t76" style="left:528.70px;top:812.01px;font-size:11.67px;color:#000;letter-spacing:-0.075px;">5: Firma del  Director  Administrativo y Financiero, una vez hayan firmado los anteriores</span>
<span class="t" id="t77" style="left:528.70px;top:846.01px;font-size:11.67px;color:#000;letter-spacing:-0.095px;">6: Firma del Jefe de  Gestion Humana.</span>
<span class="t" id="t78" style="left:545.80px;top:884.01px;font-size:15px;font-weight:700;color:#000;letter-spacing:-0.045px;">Cargos que otorgan</span>
<span class="t" id="t79" style="left:577.60px;top:918.00px;font-size:14.84px;font-weight:700;color:#000;letter-spacing:-0.319px;">Paz y Salvo</span>
<span class="t" id="t80" style="left:753.10px;top:892.01px;font-size:15px;font-weight:700;color:#000;letter-spacing:-0.112px;">Nombre del</span>
<span class="t" id="t81" style="left:747.20px;top:908.01px;font-size:15px;font-weight:700;color:#000;letter-spacing:0.020px;">Responsable</span>
<span class="t" id="t82" style="left:956.50px;top:892.01px;font-size:15px;font-weight:700;color:#000;letter-spacing:0.003px;">Visto bueno</span>
<span class="t" id="t83" style="left:1188.50px;top:892.01px;font-size:15px;font-weight:700;color:#000;letter-spacing:-0.074px;">Observaciones</span>
<span class="t" id="t84" style="left:526.50px;top:980.01px;font-size:15px;color:#000;letter-spacing:-0.040px;">1. Jefe Inmediato</span>
<span class="t" id="t85" style="left:13.90px;top:1012.01px;font-size:12.6px;color:#3a3a3a;letter-spacing:0.189px;">Page 1 of 1</span>
<span class="t" id="t86" style="left:106.10px;top:1012.01px;font-size:12.6px;color:#3a3a3a;letter-spacing:0.232px;">171 words</span>
<span class="t" id="t87" style="left:231.30px;top:1012.01px;font-size:12.6px;color:#3a3a3a;letter-spacing:0.012px;">English (United States)</span>
<span class="t" id="t88" style="left:384.20px;top:1012.01px;font-size:12.6px;color:#3a3a3a;letter-spacing:0.065px;">Text Predictions: On</span>
<span class="t" id="t89" style="left:585.30px;top:1012.01px;font-size:12.6px;color:#3a3a3a;letter-spacing:0.252px;">Accessibility: Good to go</span>
<span class="t" id="t90" style="left:1500.40px;top:1011.01px;font-size:12.25px;color:#3a3a3a;letter-spacing:-0.272px;">Focus</span>
<span class="t" id="t91" style="left:1879.30px;top:1013.01px;font-size:11.95px;color:#3a3a3a;letter-spacing:-0.262px;">100%</span>
<svg style="position:absolute;left:0;top:0;overflow:visible;pointer-events:none" width="1919" height="1029"><rect x="523.7" y="104.5" width="34.2" height="26.9" rx="2.2" fill="none" stroke="#fb0007" stroke-width="3.3"/><path d="M550.8 131.6 L704.9 491.4" stroke="#fb0007" stroke-width="4.2" fill="none"/><path d="M712.3 508 L699.2 492.6 L710.2 487.9 Z" fill="#fb0007" stroke="#fb0007" stroke-width="0.6" stroke-linejoin="round"/></svg>
</div></body></html>
